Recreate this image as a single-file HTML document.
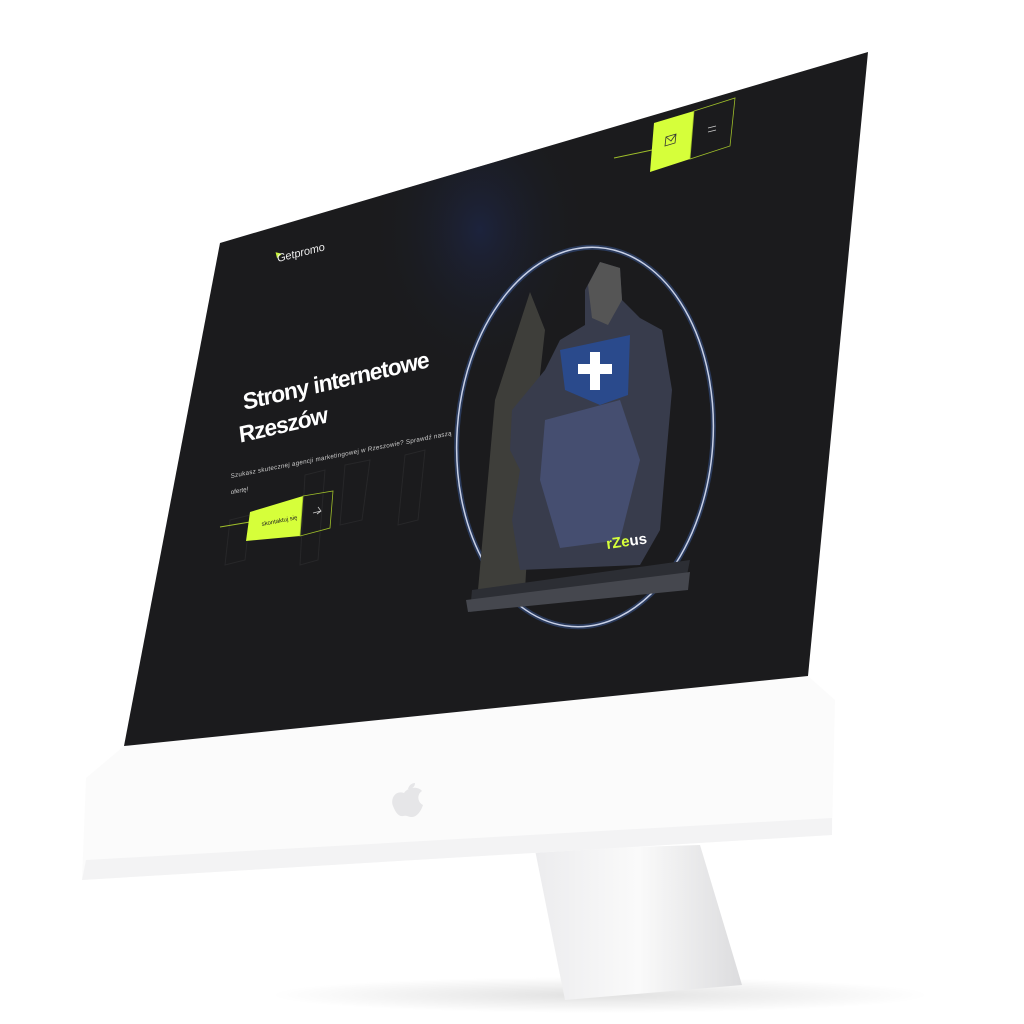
<!DOCTYPE html>
<html><head><meta charset="utf-8"><style>
html,body{margin:0;padding:0;background:#fff;width:1024px;height:1024px;overflow:hidden}
svg{display:block}
text{font-family:"Liberation Sans",sans-serif}
</style></head><body>
<svg width="1024" height="1024" viewBox="0 0 1024 1024" xmlns="http://www.w3.org/2000/svg">
<defs>
<radialGradient id="glow" cx="0.5" cy="0.5" r="0.5">
<stop offset="0" stop-color="#1c2440" stop-opacity="0.9"/>
<stop offset="1" stop-color="#1b1b1d" stop-opacity="0"/>
</radialGradient>
<linearGradient id="stand" x1="0" x2="1" y1="0" y2="0">
<stop offset="0" stop-color="#ececee"/><stop offset="0.5" stop-color="#fafafa"/><stop offset="1" stop-color="#dcdcde"/>
</linearGradient>
<radialGradient id="shad" cx="0.5" cy="0.5" r="0.5">
<stop offset="0" stop-color="#000" stop-opacity="0.12"/><stop offset="1" stop-color="#000" stop-opacity="0"/>
</radialGradient>
<clipPath id="scr"><polygon points="220,243 868,52 808,676 124,746"/></clipPath>
</defs>
<ellipse cx="600" cy="995" rx="330" ry="18" fill="url(#shad)"/>
<polygon points="535,850 700,845 742,985 565,1000" fill="url(#stand)"/>
<polygon points="124,746 808,676 835,700 832,835 82,880 86,778" fill="#fbfbfb"/>
<polygon points="86,860 832,818 832,835 82,880" fill="#f3f3f4"/>
<path d="M404,793c4,-6 14,-7 18,-2c-5,3 -5,11 1,14c-2,6 -6,12 -11,12c-4,0 -5,-2 -9,-1c-5,1 -8,-5 -10,-10c-3,-8 3,-16 11,-13z M408,789c1,-4 4,-6 7,-6c0,4 -3,6 -7,6z" fill="#e6e6e8"/>
<polygon points="220,243 868,52 808,676 124,746" fill="#1b1b1d"/>
<g clip-path="url(#scr)">
<ellipse cx="480" cy="230" rx="110" ry="150" fill="url(#glow)"/>
<g stroke="#272729" stroke-width="1" fill="none">
<polygon points="230,520 250,515 245,560 225,565"/>
<polygon points="305,475 325,470 318,560 300,565"/>
<polygon points="345,465 370,460 362,520 340,525"/>
<polygon points="405,455 425,450 418,520 398,525"/>
</g>
<g transform="translate(278,262) rotate(-14)">
<polygon points="0,-10 6,-7 0,-4" fill="#c9f33a"/>
<text x="0" y="0" font-size="11" fill="#eee" font-style="italic">Getpromo</text>
</g>
<line x1="614" y1="158" x2="652" y2="150" stroke="#9fbf2a" stroke-width="1"/>
<polygon points="654,123 694,111 690,159 650,172" fill="#d6ff3a"/>
<path d="M666,137l10,-3l-1,9l-10,3z M666,137l5,4l5,-7" fill="none" stroke="#333" stroke-width="0.8"/>
<polygon points="694,111 735,98 730,146 690,159" fill="none" stroke="#9fbf2a" stroke-width="0.8"/>
<path d="M708,128l8,-2 M708,132l8,-2" stroke="#ccc" stroke-width="0.8"/>
<g transform="translate(244,410) rotate(-13) skewX(-6)">
<text x="0" y="0" font-size="23" font-weight="bold" fill="#fff" letter-spacing="-1">Strony internetowe</text>
<text x="-8" y="31" font-size="23" font-weight="bold" fill="#fff" letter-spacing="-1">Rzeszów</text>
</g>
<g transform="translate(231,478) rotate(-11)" font-size="6.3" fill="#ccc" font-style="italic">
<text x="0" y="0" textLength="225">Szukasz skutecznej agencji marketingowej w Rzeszowie? Sprawdź naszą</text>
<text x="-3" y="16">ofertę!</text>
</g>
<line x1="220" y1="527" x2="250" y2="522" stroke="#9fbf2a"/>
<polygon points="250,512 303,496 300,536 246,541" fill="#d6ff3a"/>
<polygon points="303,496 333,491 330,528 300,536" fill="none" stroke="#9fbf2a" stroke-width="0.8"/>
<text transform="translate(262,526) rotate(-11)" font-size="6" fill="#222">skontaktuj się</text>
<path d="M313,513l8,-2 M318,507l3,4l-4,3" stroke="#ccc" fill="none" stroke-width="0.8"/>
<ellipse cx="585" cy="437" rx="128" ry="190" transform="rotate(4 585 437)" fill="none" stroke="#3a5a9a" stroke-width="5" opacity="0.5"/>
<ellipse cx="585" cy="437" rx="128" ry="190" transform="rotate(4 585 437)" fill="none" stroke="#c8d0e6" stroke-width="1.5"/>
<path d="M478,590 L495,400 L530,292 L545,330 L535,420 L525,590z" fill="#3e3e3a"/>
<path d="M512,410 L545,370 L560,340 L585,325 L585,290 L600,262 L620,268 L622,300 L640,318 L662,330 L672,390 L665,470 L660,530 L640,565 L520,570 L512,520 L520,470 L510,450z" fill="#383c4c"/>
<path d="M600,262 L620,268 L622,300 L608,325 L592,318 L588,285z" fill="#555"/>
<path d="M560,350 L630,335 L628,395 L600,405 L565,390z" fill="#2a4a8c"/>
<path d="M590,352h10v12h12v10h-12v16h-10v-16h-12v-10h12z" fill="#fff"/>
<path d="M545,420 L620,400 L640,460 L620,540 L560,548 L540,480z" fill="#454e70"/>
<path d="M472,590 L690,560 L685,585 L470,612z" fill="#2c2e34"/>
<path d="M466,600 L690,572 L688,590 L468,612z" fill="#45474e"/>
<text transform="translate(607,549) rotate(-8)" font-size="15" font-weight="bold" fill="#d6ff3a">rZe<tspan fill="#fff">us</tspan></text>
</g>
</svg>
</body></html>
